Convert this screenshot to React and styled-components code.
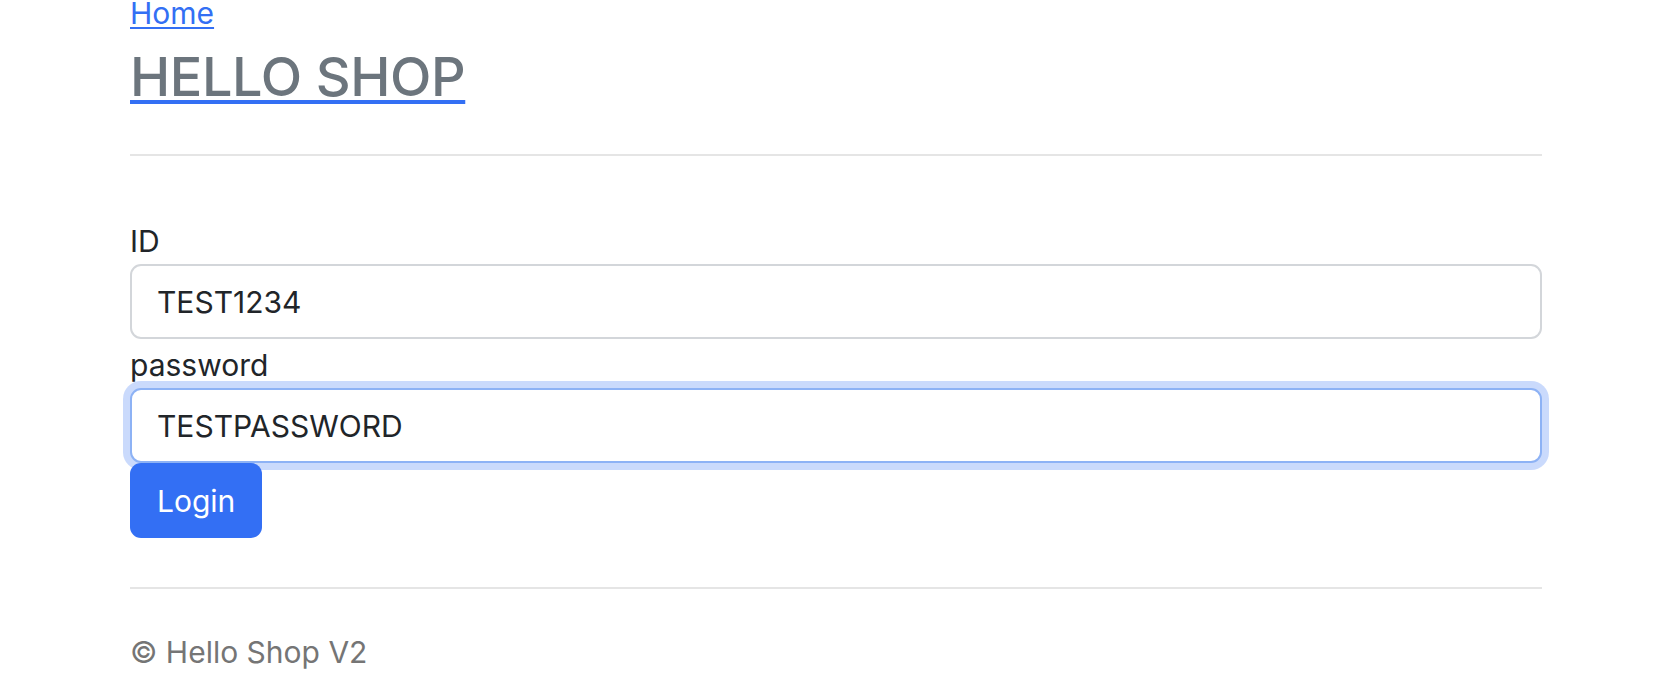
import React from "react";
import styled, { createGlobalStyle } from "styled-components";

const GlobalStyle = createGlobalStyle`
  html, body {
    margin: 0;
    padding: 0;
    background: #ffffff;
  }
  body {
    font-family: "Inter", "Liberation Sans", sans-serif;
    font-size: 30px;
    color: #212529;
  }
`;

const Page = styled.div`
  padding: 0 120px 0 130px;
`;

const Header = styled.header`
  display: flex;
  flex-direction: column;
  align-items: flex-start;
`;

const HomeLink = styled.a`
  font-size: 30px;
  line-height: 26px;
  color: #336ff4;
  text-decoration: underline;
  text-decoration-thickness: 2px;
  text-underline-offset: 3px;
`;

const TitleLink = styled.a`
  margin-top: 17px;
  font-size: 54px;
  font-weight: 500;
  letter-spacing: -0.4px;
  line-height: 67px;
  color: #6c757d;
  text-decoration: underline;
  text-decoration-color: #336ff4;
  text-decoration-thickness: 4px;
  text-underline-offset: 4px;
`;

const Divider = styled.div`
  height: 2px;
  background: #e5e5e5;
  margin-top: ${(p) => p.$top}px;
`;

const Form = styled.form`
  display: flex;
  flex-direction: column;
  align-items: stretch;
  margin-top: 63px;
`;

const Label = styled.label`
  display: block;
  line-height: 45px;
  margin-top: ${(p) => (p.$spaced ? 4 : 0)}px;
`;

const Input = styled.input`
  box-sizing: border-box;
  width: 100%;
  height: 75px;
  padding: 0 25px;
  font-family: inherit;
  font-size: 30px;
  color: #212529;
  caret-color: #000;
  background: #fff;
  border: 2px solid ${(p) => (p.$focused ? "#8db2f5" : "#d3d6da")};
  border-radius: 11px;
  outline: none;
  box-shadow: ${(p) =>
    p.$focused ? "0 0 0 7px rgba(52, 112, 245, 0.26)" : "none"};
`;

const Button = styled.button`
  align-self: flex-start;
  height: 75px;
  padding: 0 27px;
  font-family: inherit;
  font-size: 30px;
  color: #fff;
  background: #336ff4;
  border: 0;
  border-radius: 11px;
  cursor: pointer;
`;

const Footer = styled.footer`
  margin-top: 41px;
  line-height: 45px;
  color: #757575;
`;

export default function App() {
  return (
    <>
      <GlobalStyle />
      <Page>
        <Header>
          <HomeLink href="#">Home</HomeLink>
          <TitleLink href="#">HELLO SHOP</TitleLink>
        </Header>
        <Divider $top={44} />
        <Form onSubmit={(e) => e.preventDefault()}>
          <Label htmlFor="id">ID</Label>
          <Input id="id" type="text" defaultValue="TEST1234" />
          <Label htmlFor="pw" $spaced>
            password
          </Label>
          <Input id="pw" type="text" defaultValue="TESTPASSWORD" $focused autoFocus />
          <Button type="submit">Login</Button>
        </Form>
        <Divider $top={49} />
        <Footer>© Hello Shop V2</Footer>
      </Page>
    </>
  );
}
